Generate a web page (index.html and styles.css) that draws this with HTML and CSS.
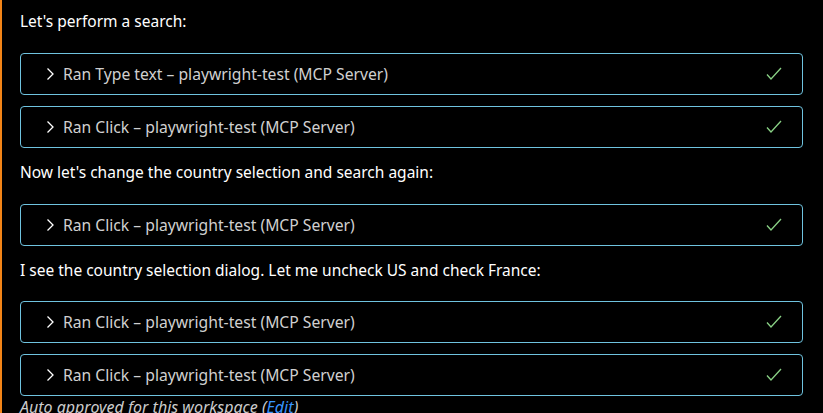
FILE: index.html
```html
<!DOCTYPE html>
<html>
<head>
<meta charset="utf-8">
<link rel="stylesheet" href="styles.css">
</head>
<body>
<div class="chat">
  <p class="msg">Let's perform a search:</p>
  <div class="tool"><span class="chev"><svg width="10" height="14" viewBox="0 0 10 14"><path d="M2.5 1.5 L8 7 L2.5 12.5" fill="none" stroke="#fff" stroke-width="1.3"/></svg></span><span class="label">Ran Type text – playwright-test (MCP Server)</span><span class="check"><svg width="16" height="14" viewBox="0 0 16 14"><path d="M1 7.5 L5 12 L15 1" fill="none" stroke="#89d185" stroke-width="1.3"/></svg></span></div>
  <div class="tool"><span class="chev"><svg width="10" height="14" viewBox="0 0 10 14"><path d="M2.5 1.5 L8 7 L2.5 12.5" fill="none" stroke="#fff" stroke-width="1.3"/></svg></span><span class="label">Ran Click – playwright-test (MCP Server)</span><span class="check"><svg width="16" height="14" viewBox="0 0 16 14"><path d="M1 7.5 L5 12 L15 1" fill="none" stroke="#89d185" stroke-width="1.3"/></svg></span></div>
  <p class="msg">Now let's change the country selection and search again:</p>
  <div class="tool"><span class="chev"><svg width="10" height="14" viewBox="0 0 10 14"><path d="M2.5 1.5 L8 7 L2.5 12.5" fill="none" stroke="#fff" stroke-width="1.3"/></svg></span><span class="label">Ran Click – playwright-test (MCP Server)</span><span class="check"><svg width="16" height="14" viewBox="0 0 16 14"><path d="M1 7.5 L5 12 L15 1" fill="none" stroke="#89d185" stroke-width="1.3"/></svg></span></div>
  <p class="msg">I see the country selection dialog. Let me uncheck US and check France:</p>
  <div class="tool"><span class="chev"><svg width="10" height="14" viewBox="0 0 10 14"><path d="M2.5 1.5 L8 7 L2.5 12.5" fill="none" stroke="#fff" stroke-width="1.3"/></svg></span><span class="label">Ran Click – playwright-test (MCP Server)</span><span class="check"><svg width="16" height="14" viewBox="0 0 16 14"><path d="M1 7.5 L5 12 L15 1" fill="none" stroke="#89d185" stroke-width="1.3"/></svg></span></div>
  <div class="tool"><span class="chev"><svg width="10" height="14" viewBox="0 0 10 14"><path d="M2.5 1.5 L8 7 L2.5 12.5" fill="none" stroke="#fff" stroke-width="1.3"/></svg></span><span class="label">Ran Click – playwright-test (MCP Server)</span><span class="check"><svg width="16" height="14" viewBox="0 0 16 14"><path d="M1 7.5 L5 12 L15 1" fill="none" stroke="#89d185" stroke-width="1.3"/></svg></span></div>
  <p class="note">Auto approved for this workspace (<span class="link">Edit</span>)</p>
</div>
</body>
</html>
```
FILE: styles.css
```css
html, body {
  margin: 0;
  padding: 0;
  background: #000;
  height: 100%;
  overflow: hidden;
}
body {
  border-left: 2px solid #f38518;
  font-family: "Noto Sans", "Open Sans", sans-serif;
  font-size: 15px;
  color: #fff;
}
.chat {
  padding: 10px 20px 0 18px;
  display: flex;
  flex-direction: column;
}
.msg {
  margin: 2px 0 21px;
  line-height: 22px;
  height: 22px;
  font-size: 15.5px;
}
.msg:first-child { margin-top: 0; }
.msg:nth-of-type(3) { margin-bottom: 20px; }
.tool {
  box-sizing: border-box;
  height: 42px;
  border: 1px solid #6fc3df;
  border-radius: 4px;
  display: flex;
  align-items: center;
  padding: 0 20px 0 24px;
  margin-bottom: 11px;
  color: #d0d0d0;
}
.chev {
  width: 10px;
  height: 14px;
  display: flex;
  align-items: center;
  margin-right: 8px;
}
.label { flex: 1; white-space: nowrap; font-size: 15.7px; }
.check { display: flex; }
.note {
  margin: -9px 0 0;
  font-style: italic;
  font-size: 16px;
  color: #ccc;
  line-height: 18px;
  white-space: nowrap;
}
.link { color: #3794ff; }
```
